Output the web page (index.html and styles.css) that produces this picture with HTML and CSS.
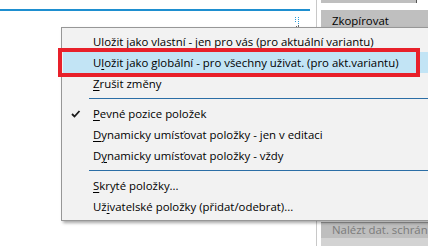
FILE: index.html
```html
<!DOCTYPE html>
<html lang="cs">
<head>
<meta charset="utf-8">
<link rel="stylesheet" href="styles.css">
</head>
<body>
<div class="screen">
  <div class="left-pane">
    <div class="tab-line"></div>
    <div class="grip">
      <svg width="6" height="11" viewBox="0 0 6 11">
        <rect x="0" y="0" width="1" height="1" fill="#2a9ad8"/>
        <rect x="3" y="0" width="1" height="1" fill="#2a9ad8"/>
        <rect x="0" y="2" width="1" height="1" fill="#2a9ad8"/>
        <rect x="3" y="2" width="1" height="1" fill="#2a9ad8"/>
        <rect x="0" y="4" width="1" height="1" fill="#2a9ad8"/>
        <rect x="3" y="4" width="1" height="1" fill="#2a9ad8"/>
        <rect x="3" y="6" width="1" height="1" fill="#2a9ad8"/>
        <path d="M3 8 L4 9 L3 10 M1 10 L2 9" stroke="#6a6a6a" stroke-width="1" fill="none"/>
      </svg>
    </div>
  </div>
  <div class="right-pane">
    <div class="btn btn-top"></div>
    <div class="btn btn-copy">Zkopírovat</div>
    <div class="spacer"></div>
    <div class="btn btn-find">Nalézt dat. schránk</div>
  </div>

  <div class="menu">
    <div class="item"><span class="label"><u>U</u>ložit jako vlastní - jen pro vás (pro aktuální variantu)</span></div>
    <div class="item hot"><span class="label">U<u>l</u>ožit jako globální - pro všechny uživat. (pro akt.variantu)</span></div>
    <div class="item"><span class="label"><u>Z</u>rušit změny</span></div>
    <div class="sep"></div>
    <div class="item">
      <svg class="check" width="10" height="8" viewBox="0 0 10 8"><path d="M1 4 L3.5 6.5 L8.5 1" stroke="#1a1a1a" stroke-width="1.8" fill="none"/></svg>
      <span class="label"><u>P</u>evné pozice položek</span>
    </div>
    <div class="item"><span class="label"><u>D</u>ynamicky umísťovat položky - jen v editaci</span></div>
    <div class="item"><span class="label">D<u>y</u>namicky umísťovat položky - vždy</span></div>
    <div class="sep"></div>
    <div class="item"><span class="label"><u>S</u>kryté položky...</span></div>
    <div class="item"><span class="label">Už<u>i</u>vatelské položky (přidat/odebrat)...</span></div>
  </div>

  <div class="callout"></div>
</div>
</body>
</html>
```
FILE: styles.css
```css
html, body {
  margin: 0;
  padding: 0;
  background: #ffffff;
  overflow: hidden;
}

.screen {
  position: relative;
  width: 428px;
  height: 246px;
  overflow: hidden;
  display: flex;
  font-family: "Open Sans", "Noto Sans", sans-serif;
  font-size: 11.4px;
  color: #000;
}

.left-pane {
  width: 316px;
  border-right: 1px solid #c8c8c8;
  padding-top: 9px;
  display: flex;
  flex-direction: column;
}

.tab-line {
  width: 310px;
  height: 2px;
  background: #1e8fd0;
}

.grip {
  display: flex;
  justify-content: flex-end;
  padding-right: 15px;
  padding-top: 6px;
  line-height: 0;
}

.right-pane {
  flex: 1;
  min-width: 0;
  padding-left: 4px;
  display: flex;
  flex-direction: column;
}

.btn {
  background: #bfbfbf;
  padding-left: 11px;
  white-space: nowrap;
  overflow: hidden;
}

.btn-top {
  height: 3px;
  width: 95px;
  padding-left: 0;
  border-right: 1px solid #555;
  margin-bottom: 7px;
}

.btn-copy {
  height: 22px;
  line-height: 21px;
}

.spacer {
  flex: 1;
}

.btn-find {
  height: 24px;
  line-height: 13px;
  border-top: 1px solid #9a9a9a;
  color: #7b7b7b;
  box-sizing: border-box;
  background: linear-gradient(#bebebe 0 15px, #d3d3d3 15px);
}

.menu {
  position: absolute;
  left: 61px;
  top: 27px;
  width: 400px;
  background: #f2f2f2;
  border: 1px solid #979797;
  box-shadow: 2px 2px 3px rgba(0, 0, 0, 0.35);
  padding: 3px 0;
  box-sizing: border-box;
}

.item {
  position: relative;
  height: 21px;
  line-height: 21px;
  padding-left: 30px;
  margin: 0 2px 0 1px;
  white-space: nowrap;
}

.item.hot {
  background: #c2e4f5;
}

.check {
  position: absolute;
  left: 8px;
  top: 7px;
}

.sep {
  height: 9px;
  position: relative;
}

.sep::after {
  content: "";
  position: absolute;
  left: 27px;
  right: 0;
  top: 4px;
  height: 1px;
  background: #2b6ea6;
}

u {
  text-decoration-thickness: 1px;
  text-underline-offset: 2px;
}

.callout {
  position: absolute;
  left: 58px;
  top: 48px;
  width: 362px;
  height: 29px;
  border: 4px solid #e8202a;
  box-sizing: border-box;
}
```
